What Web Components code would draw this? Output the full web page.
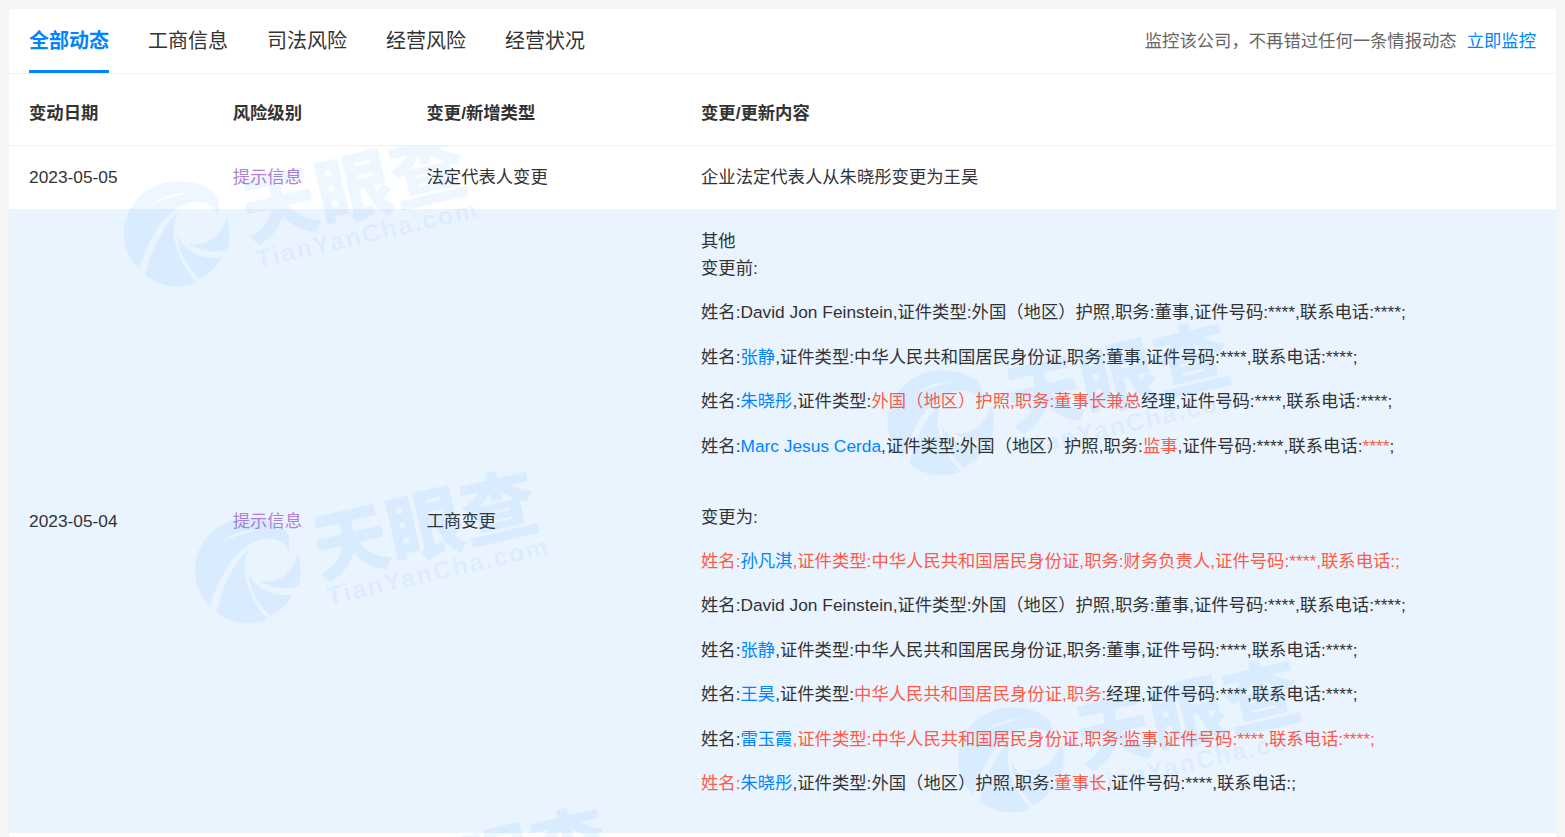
<!DOCTYPE html>
<html lang="zh-CN">
<head>
<meta charset="utf-8">
<title>全部动态</title>
<style>
html,body{margin:0;padding:0;height:100%;overflow:hidden;background:#f5f5f5}
body{padding:9px 9px 0 9px;box-sizing:border-box;font-family:"Liberation Sans","Noto Sans CJK SC",sans-serif;font-size:17.33px;line-height:26.67px;color:#333}
</style>
</head>
<body>
<change-panel>
  <nav-tabs slot="head">
    <nav-tab active>全部动态</nav-tab>
    <nav-tab>工商信息</nav-tab>
    <nav-tab>司法风险</nav-tab>
    <nav-tab>经营风险</nav-tab>
    <nav-tab>经营状况</nav-tab>
    <span slot="aside">监控该公司，不再错过任何一条情报动态</span>
    <t-link slot="aside">立即监控</t-link>
  </nav-tabs>
  <risk-row head slot="head">
    <span>变动日期</span><span>风险级别</span><span>变更/新增类型</span><span>变更/更新内容</span>
  </risk-row>
  <risk-row compact>
    <span>2023-05-05</span><t-tip>提示信息</t-tip><span>法定代表人变更</span>
    <span>企业法定代表人从朱晓彤变更为王昊</span>
  </risk-row>
  <risk-row tinted>
    <span>2023-05-04</span><t-tip>提示信息</t-tip><span>工商变更</span>
    <change-body>
      <div>其他</div>
      <change-line>变更前:</change-line>
      <change-line>姓名:David Jon Feinstein,证件类型:外国（地区）护照,职务:董事,证件号码:****,联系电话:****;</change-line>
      <change-line>姓名:<t-link>张静</t-link>,证件类型:中华人民共和国居民身份证,职务:董事,证件号码:****,联系电话:****;</change-line>
      <change-line>姓名:<t-link>朱晓彤</t-link>,证件类型:<t-red>外国（地区）护照,职务:董事长兼总</t-red>经理,证件号码:****,联系电话:****;</change-line>
      <change-line>姓名:<t-link>Marc Jesus Cerda</t-link>,证件类型:外国（地区）护照,职务:<t-red>监事</t-red>,证件号码:****,联系电话:<t-red>****</t-red>;</change-line>
      <change-line gap>变更为:</change-line>
      <change-line><t-red>姓名:</t-red><t-link>孙凡淇</t-link><t-red>,证件类型:中华人民共和国居民身份证,职务:财务负责人,证件号码:****,联系电话:;</t-red></change-line>
      <change-line>姓名:David Jon Feinstein,证件类型:外国（地区）护照,职务:董事,证件号码:****,联系电话:****;</change-line>
      <change-line>姓名:<t-link>张静</t-link>,证件类型:中华人民共和国居民身份证,职务:董事,证件号码:****,联系电话:****;</change-line>
      <change-line>姓名:<t-link>王昊</t-link>,证件类型:<t-red>中华人民共和国居民身份证,职务:</t-red>经理,证件号码:****,联系电话:****;</change-line>
      <change-line>姓名:<t-link>雷玉霞</t-link><t-red>,证件类型:中华人民共和国居民身份证,职务:监事,证件号码:****,联系电话:****;</t-red></change-line>
      <change-line><t-red>姓名:</t-red><t-link>朱晓彤</t-link>,证件类型:外国（地区）护照,职务:<t-red>董事长</t-red>,证件号码:****,联系电话:;</change-line>
    </change-body>
  </risk-row>
  <water-mark slot="marks" style="left:115px;top:-25px"></water-mark>
  <water-mark slot="marks" style="left:879px;top:164px"></water-mark>
  <water-mark slot="marks" style="left:186px;top:312px"></water-mark>
  <water-mark slot="marks" style="left:949px;top:501px"></water-mark>
  <water-mark slot="marks" style="left:257px;top:649px"></water-mark>
</change-panel>
<script>
function def(name, css, html){
  customElements.define(name, class extends HTMLElement{
    constructor(){
      super();
      this.attachShadow({mode:'open'}).innerHTML='<style>'+css+'</style>'+(html||'<slot></slot>');
    }
  });
}
def('change-panel',
 ':host{display:block;background:#fff;height:828px;overflow:hidden}'+
 '.body{position:relative}'+
 '.marks{position:absolute;inset:0;overflow:hidden;pointer-events:none;height:700px}',
 '<slot name="head"></slot><div class="body"><slot></slot><div class="marks"><slot name="marks"></slot></div></div>');
def('nav-tabs',
 ':host{display:flex;align-items:center;height:64px;padding:0 20px;border-bottom:1px solid #f0f0f0}'+
 '.tabs{display:flex;gap:39px;flex:1}'+
 '.aside{display:flex;gap:10px;color:#666}',
 '<div class="tabs"><slot></slot></div><div class="aside"><slot name="aside"></slot></div>');
def('nav-tab',
 ':host{display:block;position:relative;height:64px;line-height:65px;font-size:20px;color:#333;white-space:nowrap}'+
 ':host([active]){color:#0084ff;font-weight:700}'+
 ':host([active])::after{content:"";position:absolute;left:0;right:0;bottom:0;height:3px;background:#0084ff}');
def('risk-row',
 ':host{display:grid;grid-template-columns:203.7px 193.8px 274.5px 1fr;align-items:center;padding:19.1px 0 18.67px 20px}'+
 ':host([head]){padding-top:25.5px;padding-bottom:18.67px;font-weight:700;border-bottom:1px solid #f0f0f0}'+
 ':host([compact]){padding-top:18.2px;padding-bottom:18.2px}'+
 ':host([tinted]){background:#e9f4ff}');
def('change-body', ':host{display:block}');
def('change-line', ':host{display:block;margin-bottom:17.8px;white-space:nowrap}:host([gap]){margin-top:44.34px}');
def('t-link', ':host{color:#0084ff}');
def('t-red', ':host{color:#ff5a47}');
def('t-tip', ':host{color:#b27fd6}');
def('water-mark',
 ':host{position:absolute;display:block;width:372px;height:180px}'+
 'svg{display:block;overflow:visible}'+
 '.cn{font:900 76px "Noto Sans CJK SC",sans-serif}'+
 '.en{font:700 25px "Liberation Sans",sans-serif;letter-spacing:1.9px}',
 '<svg width="372" height="180" viewBox="0 0 372 180" fill="#0080ff" fill-opacity=".065">'+
 '<svg x="0" y="60" width="106" height="106" viewBox="15 10 320 318">'+
 '<path fill-rule="evenodd" d="M62,275C25,240 15,205 15,165C15,80 90,10 175,10C225,10 270,22 295,55C302,75 302,95 297,112C292,90 272,74 240,72C195,70 140,105 105,170C85,205 70,240 62,275ZM100,80C130,66 170,52 215,42C165,44 125,58 100,80Z"/>'+
 '<path d="M80,292C95,220 130,150 178,100C165,130 160,170 170,200C180,240 205,285 235,315C215,325 195,327 175,327C140,327 105,315 80,292Z"/>'+
 '<path d="M175,170C190,210 240,250 310,240C295,270 270,290 243,305C205,270 180,225 175,170Z"/>'+
 '<path d="M325,115C335,140 338,180 328,212C300,228 250,225 208,198C240,205 280,195 300,165C315,150 322,130 325,115Z"/>'+
 '</svg>'+
 '<text class="cn" transform="translate(125 120) rotate(-13)">天眼查</text>'+
 '<text class="en" transform="translate(134 147) rotate(-13)">TianYanCha.com</text>'+
 '</svg>');
</script>
</body>
</html>
